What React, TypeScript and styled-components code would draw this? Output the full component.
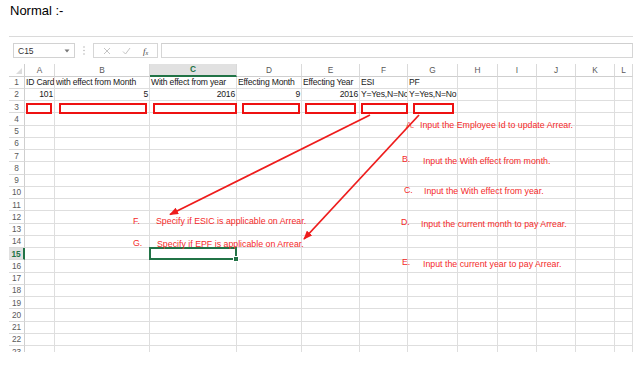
import React from "react";
import styled, { createGlobalStyle } from "styled-components";

const GlobalStyle = createGlobalStyle`
  body {
    margin: 0;
    background: #ffffff;
  }
`;

const COLS = [
  { key: "A", w: 30 },
  { key: "B", w: 95 },
  { key: "C", w: 87 },
  { key: "D", w: 65 },
  { key: "E", w: 58 },
  { key: "F", w: 48 },
  { key: "G", w: 50 },
  { key: "H", w: 40 },
  { key: "I", w: 39 },
  { key: "J", w: 39 },
  { key: "K", w: 39 },
  { key: "L", w: 18 },
];

type CellData = { text: string; right?: boolean };

const ROW_DATA: Record<number, CellData[]> = {
  1: [
    { text: "ID Card" },
    { text: "with effect from Month" },
    { text: "With effect from year" },
    { text: "Effecting Month" },
    { text: "Effecting Year" },
    { text: "ESI" },
    { text: "PF" },
  ],
  2: [
    { text: "101", right: true },
    { text: "5", right: true },
    { text: "2016", right: true },
    { text: "9", right: true },
    { text: "2016", right: true },
    { text: "Y=Yes,N=No" },
    { text: "Y=Yes,N=No" },
  ],
};

const SEL_ROW = 15;
const SEL_COL = "C";

// red boxes over row 3 (outer edges in page px)
const BOXES = [
  [26, 52],
  [59, 147],
  [153, 237],
  [242, 300],
  [305, 356],
  [361, 408],
  [413, 454],
];

const NOTES = [
  { tag: "A.", tx: 406, ty: 125, text: "Input the Employee Id to update Arrear.", x: 420, y: 125 },
  { tag: "B.", tx: 402, ty: 159, text: "Input the With effect from month.", x: 423, y: 161 },
  { tag: "C.", tx: 404, ty: 190, text: "Input the With effect from year.", x: 424, y: 191 },
  { tag: "D.", tx: 401, ty: 222, text: "Input the current month to pay Arrear.", x: 421, y: 224 },
  { tag: "E.", tx: 402, ty: 262, text: "Input the current year to pay Arrear.", x: 423, y: 264 },
  { tag: "F.", tx: 133, ty: 221, text: "Specify if ESIC is applicable on Arrear.", x: 156, y: 221 },
  { tag: "G.", tx: 133, ty: 243, text: "Specify if EPF is applicable on Arrear.", x: 157, y: 244 },
];

const Page = styled.div`
  position: relative;
  width: 641px;
  height: 380px;
  overflow: hidden;
  background: #fff;
  font-family: "Liberation Sans", Arial, sans-serif;
`;

const Title = styled.div`
  box-sizing: border-box;
  height: 36px;
  padding: 3px 0 0 10px;
  font-size: 13px;
  line-height: 15px;
  color: #000;
`;

const Sheet = styled.div`
  margin-left: 9px;
  width: 624px;
  border-top: 1px solid #dadada;
`;

const FormulaBar = styled.div`
  display: flex;
  height: 15px;
  margin: 6px 0;
`;

const NameBox = styled.div`
  box-sizing: border-box;
  margin-left: 4px;
  width: 62px;
  border: 1px solid #d2d2d2;
  display: flex;
  align-items: center;
  justify-content: space-between;
  padding: 0 4px 0 4px;
  font-size: 8.5px;
  color: #333;
`;

const Dots = styled.div`
  width: 18px;
  display: flex;
  align-items: center;
  justify-content: center;
`;

const FnBox = styled.div`
  box-sizing: border-box;
  width: 65px;
  border: 1px solid #d6d6d6;
  display: flex;
  align-items: center;
  justify-content: space-around;
  padding: 0 3px;
`;

const Fx = styled.span`
  font-family: "Liberation Serif", serif;
  font-style: italic;
  font-size: 9px;
  color: #444;
  sub {
    font-size: 6px;
    vertical-align: -1px;
  }
`;

const FormulaInput = styled.div`
  box-sizing: border-box;
  margin-left: 3px;
  flex: 1;
  border: 1px solid #d6d6d6;
  border-top-color: #cfcfcf;
`;

const Grid = styled.div`
  display: grid;
  grid-template-columns: 16px ${COLS.map((c) => c.w + "px").join(" ")};
  grid-template-rows: 12.5px repeat(23, 12.25px);
  height: 288px;
  overflow: hidden;
  font-size: 8.6px;
  color: #1a1a1a;
`;

const Corner = styled.div`
  position: relative;
  box-sizing: border-box;
  background: #fff;
  border-right: 1px solid #cfcfcf;
  border-bottom: 1px solid #cfcfcf;
  &::after {
    content: "";
    position: absolute;
    right: 2px;
    bottom: 2px;
    border-left: 6px solid transparent;
    border-bottom: 6px solid #dcdcdc;
  }
`;

const ColHead = styled.div<{ $sel?: boolean }>`
  box-sizing: border-box;
  display: flex;
  align-items: center;
  justify-content: center;
  font-size: 8.3px;
  background: ${(p) => (p.$sel ? "#e1e1e1" : "#fff")};
  color: ${(p) => (p.$sel ? "#217346" : "#595959")};
  font-weight: ${(p) => (p.$sel ? "bold" : "normal")};
  border-right: 1px solid #dadada;
  border-bottom: ${(p) => (p.$sel ? "2px solid #217346" : "1px solid #cfcfcf")};
`;

const RowHead = styled.div<{ $sel?: boolean }>`
  box-sizing: border-box;
  display: flex;
  align-items: center;
  justify-content: center;
  font-size: 8.3px;
  background: ${(p) => (p.$sel ? "#e1e1e1" : "#fff")};
  color: ${(p) => (p.$sel ? "#217346" : "#595959")};
  font-weight: ${(p) => (p.$sel ? "bold" : "normal")};
  border-right: ${(p) => (p.$sel ? "2px solid #217346" : "1px solid #cfcfcf")};
  border-bottom: 1px solid #dadada;
`;

const Cell = styled.div<{ $right?: boolean; $sel?: boolean }>`
  position: relative;
  box-sizing: border-box;
  display: flex;
  align-items: center;
  justify-content: ${(p) => (p.$right ? "flex-end" : "flex-start")};
  padding: 0 1px;
  white-space: nowrap;
  letter-spacing: -0.2px;
  overflow: ${(p) => (p.$sel ? "visible" : "hidden")};
  border-right: 1px solid #dedede;
  border-bottom: 1px solid #dedede;
  ${(p) =>
    p.$sel &&
    `
    &::after {
      content: "";
      position: absolute;
      left: -1px;
      top: -1px;
      right: -1px;
      bottom: -1px;
      border: 2px solid #217346;
    }
    &::before {
      content: "";
      position: absolute;
      right: -3px;
      bottom: -3px;
      width: 4px;
      height: 4px;
      background: #217346;
      border: 1px solid #fff;
      z-index: 1;
    }
  `}
`;

const Overlay = styled.svg`
  position: absolute;
  left: 0;
  top: 0;
  pointer-events: none;
`;

const Note = styled.div<{ $x: number; $y: number }>`
  position: absolute;
  left: ${(p) => p.$x}px;
  top: ${(p) => p.$y - 5}px;
  line-height: 10px;
  font-size: 8.8px;
  color: #f42a2a;
  white-space: nowrap;
`;

function Caret() {
  return (
    <svg width="6" height="4" viewBox="0 0 6 4">
      <path d="M0.5 0.5 L5.5 0.5 L3 3.5 Z" fill="#777" />
    </svg>
  );
}

function VDots() {
  return (
    <svg width="2" height="9" viewBox="0 0 2 9">
      <circle cx="1" cy="1" r="0.7" fill="#aaa" />
      <circle cx="1" cy="4.5" r="0.7" fill="#aaa" />
      <circle cx="1" cy="8" r="0.7" fill="#aaa" />
    </svg>
  );
}

function CrossIcon() {
  return (
    <svg width="8" height="8" viewBox="0 0 8 8">
      <path d="M1 1 L7 7 M7 1 L1 7" stroke="#c4c4c4" strokeWidth="1" />
    </svg>
  );
}

function CheckIcon() {
  return (
    <svg width="9" height="8" viewBox="0 0 9 8">
      <path d="M1 4.5 L3.5 7 L8 1" stroke="#c4c4c4" strokeWidth="1" fill="none" />
    </svg>
  );
}

function App() {
  const rows = Array.from({ length: 23 }, (_, i) => i + 1);

  return (
    <Page>
      <GlobalStyle />
      <Title>Normal :-</Title>
      <Sheet>
        <FormulaBar>
          <NameBox>
            <span>C15</span>
            <Caret />
          </NameBox>
          <Dots>
            <VDots />
          </Dots>
          <FnBox>
            <CrossIcon />
            <CheckIcon />
            <Fx>
              f<sub>x</sub>
            </Fx>
          </FnBox>
          <FormulaInput />
        </FormulaBar>

        <Grid>
          <Corner />
          {COLS.map((c) => (
            <ColHead key={c.key} $sel={c.key === SEL_COL}>
              {c.key}
            </ColHead>
          ))}
          {rows.map((r) => (
            <React.Fragment key={r}>
              <RowHead $sel={r === SEL_ROW}>{r}</RowHead>
              {COLS.map((c, ci) => {
                const d = ROW_DATA[r]?.[ci];
                return (
                  <Cell
                    key={c.key}
                    $right={d?.right}
                    $sel={r === SEL_ROW && c.key === SEL_COL}
                  >
                    {d?.text}
                  </Cell>
                );
              })}
            </React.Fragment>
          ))}
        </Grid>
      </Sheet>

      <Overlay width="641" height="380" viewBox="0 0 641 380">
        <defs>
          <marker
            id="head"
            viewBox="0 0 10 8"
            refX="9"
            refY="4"
            markerWidth="5"
            markerHeight="4"
            orient="auto"
            markerUnits="strokeWidth"
          >
            <path d="M0 0 L10 4 L0 8 Z" fill="#ee1c1c" />
          </marker>
        </defs>
        {BOXES.map(([x1, x2]) => (
          <rect
            key={x1}
            x={x1 + 1}
            y={104}
            width={x2 - x1 - 2}
            height={9}
            fill="none"
            stroke="#ee1111"
            strokeWidth="2"
          />
        ))}
        <line x1="370" y1="115" x2="170" y2="214.5" stroke="#ee1c1c" strokeWidth="1.8" markerEnd="url(#head)" />
        <line x1="419" y1="115" x2="304" y2="239" stroke="#ee1c1c" strokeWidth="1.8" markerEnd="url(#head)" />
      </Overlay>

      {NOTES.map((n) => (
        <React.Fragment key={n.tag}>
          <Note $x={n.tx} $y={n.ty}>
            {n.tag}
          </Note>
          <Note $x={n.x} $y={n.y}>
            {n.text}
          </Note>
        </React.Fragment>
      ))}
    </Page>
  );
}

export default App;
